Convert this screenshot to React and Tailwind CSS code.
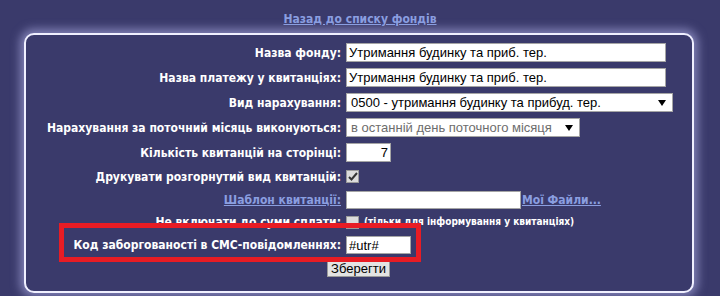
import React from "react";

const labelCls =
  "text-right text-white font-bold text-[12px] leading-none font-['DejaVu_Sans_Condensed','DejaVu_Sans',sans-serif] pr-[5px] whitespace-nowrap";
const inputCls =
  "bg-white border border-[#a5a5a5] text-black text-[13px] leading-none font-['Liberation_Sans',Arial,sans-serif] px-[2px] outline-none";

function Row({ label, h, children, labelLink }) {
  return (
    <div className={`grid grid-cols-[320px_1fr] items-center ${h}`}>
      <div className={labelCls}>
        {labelLink ? (
          <span className="text-[#8a9ee0] underline">{label}</span>
        ) : (
          label
        )}
      </div>
      <div className="flex items-center">{children}</div>
    </div>
  );
}

function Select({ value, w, grey }) {
  return (
    <div
      className={`${w} h-[19px] bg-white border border-[#a5a5a5] flex items-center justify-between pl-[4px] pr-[6px] text-[13px] font-['Liberation_Sans',Arial,sans-serif] ${
        grey ? "text-[#6d6d6d]" : "text-black"
      }`}
    >
      <span className="whitespace-nowrap">{value}</span>
      <svg width="8" height="6" viewBox="0 0 8 6">
        <path d="M0 0 L8 0 L4 6 Z" fill="#000" />
      </svg>
    </div>
  );
}

function Check({ checked }) {
  return (
    <div className="w-[13px] h-[13px] bg-[#dcdcdc] border border-[#9a9a9a] flex items-center justify-center">
      {checked && (
        <svg width="10" height="9" viewBox="0 0 10 9">
          <path d="M1 5 L3.5 7.5 L9 1" stroke="#333" strokeWidth="2" fill="none" />
        </svg>
      )}
    </div>
  );
}

export default function App() {
  return (
    <div className="relative w-[720px] h-[296px] bg-[#3a3a6b] overflow-hidden font-['DejaVu_Sans_Condensed','DejaVu_Sans',sans-serif]">
      <div className="h-[33px] flex justify-center items-start pt-[13px]">
        <span className="text-[#8a9ee0] underline font-bold text-[12px] leading-none">
          Назад до списку фондів
        </span>
      </div>
      <div className="ml-[24px] w-[670px] h-[260px] border-2 border-[#f0f0ff] rounded-[10px] shadow-[0_0_10px_4px_rgba(200,200,255,0.5)] pt-[5px] bg-[#3a3a6b]">
        <Row label="Назва фонду:" h="h-[25px]">
          <input
            className={`${inputCls} w-[320px] h-[19px]`}
            defaultValue="Утримання будинку та приб. тер."
          />
        </Row>
        <Row label="Назва платежу у квитанціях:" h="h-[25px]">
          <input
            className={`${inputCls} w-[320px] h-[19px]`}
            defaultValue="Утримання будинку та приб. тер."
          />
        </Row>
        <Row label="Вид нарахування:" h="h-[25px]">
          <Select w="w-[327px]" value="0500 - утримання будинку та прибуд. тер." />
        </Row>
        <Row label="Нарахування за поточний місяць виконуються:" h="h-[25px]">
          <Select w="w-[234px]" grey value="в останній день поточного місяця" />
        </Row>
        <Row label="Кількість квитанцій на сторінці:" h="h-[25px]">
          <input
            className={`${inputCls} w-[45px] h-[19px] text-right`}
            defaultValue="7"
          />
        </Row>
        <Row label="Друкувати розгорнутий вид квитанцій:" h="h-[23px]">
          <Check checked />
        </Row>
        <Row label="Шаблон квитанції:" labelLink h="h-[23px]">
          <input className={`${inputCls} w-[175px] h-[18px]`} defaultValue="" />
          <span className="text-[#8a9ee0] underline font-bold text-[12px] leading-none ml-[1px]">
            Мої Файли...
          </span>
        </Row>
        <Row label="Не включати до суми сплати:" h="h-[22px]">
          <Check />
          <span className="ml-[5px] text-white font-bold text-[10px] leading-none whitespace-nowrap">
            (тільки для інформування у квитанціях)
          </span>
        </Row>
        <Row label="Код заборгованості в СМС-повідомленнях:" h="h-[24px]">
          <input
            className={`${inputCls} w-[65px] h-[18px]`}
            defaultValue="#utr#"
          />
        </Row>
        <div className="flex justify-center pt-[2px]">
          <button className="ml-[-1px] h-[18px] px-[3px] bg-[#e3e3e3] border border-[#9a9a9a] text-black text-[13px] leading-none font-['Liberation_Sans',Arial,sans-serif]">
            Зберегти
          </button>
        </div>
      </div>
      <div className="absolute left-[59px] top-[223px] w-[362px] h-[39px] border-[5px] border-[#e81c24] pointer-events-none" />
    </div>
  );
}
